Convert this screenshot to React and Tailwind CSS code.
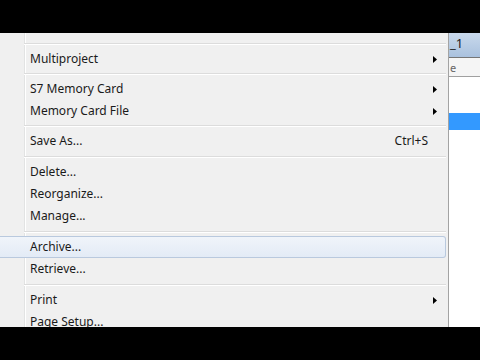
import React from "react";

const Arrow = () => (
  <svg width="4" height="7" viewBox="0 0 4 7" className="block">
    <path d="M0 0 L4 3.5 L0 7 Z" fill="#000" />
  </svg>
);

function Item({ label, arrow, shortcut, hover }) {
  return (
    <div
      className={
        "h-[22px] shrink-0 flex items-center pl-[30px] text-[12px] text-[#1a1a1a] " +
        (hover
          ? "mr-[2px] border border-l-0 border-[#b9c9de] rounded-r-[3px] bg-gradient-to-b from-[#f0f4fa] to-[#e3ebf6] pr-[9px]"
          : "pr-[11px]")
      }
    >
      <span className="flex-1 leading-none">{label}</span>
      {shortcut && <span className="mr-[9px] leading-none">{shortcut}</span>}
      {arrow && <Arrow />}
    </div>
  );
}

function Sep({ tall }) {
  return (
    <div
      className={
        (tall ? "h-[9px] " : "h-[8px] ") +
        "shrink-0 pl-[24px] pr-[2px] flex flex-col justify-center"
      }
    >
      <div className="h-px bg-[#dcdcdc]" />
      <div className="h-px bg-white" />
    </div>
  );
}

export default function App() {
  return (
    <div
      className="w-[480px] h-[360px] bg-black flex flex-col overflow-hidden"
      style={{ fontFamily: '"Noto Sans", "Open Sans", sans-serif' }}
    >
      <div className="h-[33px] shrink-0 bg-black" />
      <div className="h-[294px] shrink-0 flex overflow-hidden">
        <div className="w-[449px] shrink-0 border-r border-[#a3a3a3] bg-[linear-gradient(to_right,#f0f0f0_24px,#e2e3e3_24px,#e2e3e3_25px,#ffffff_25px,#ffffff_26px,#f0f0f0_26px)] flex flex-col">
          <div className="h-[7px] shrink-0" />
          <Sep />
          <Item label="Multiproject" arrow />
          <Sep />
          <Item label="S7 Memory Card" arrow />
          <Item label="Memory Card File" arrow />
          <Sep />
          <Item label="Save As..." shortcut="Ctrl+S" />
          <Sep tall />
          <Item label="Delete..." />
          <Item label="Reorganize..." />
          <Item label="Manage..." />
          <Sep tall />
          <Item label="Archive..." hover />
          <Item label="Retrieve..." />
          <Sep tall />
          <Item label="Print" arrow />
          <Item label="Page Setup..." />
        </div>
        <div className="flex-1 bg-white flex flex-col">
          <div className="h-[25px] shrink-0 bg-gradient-to-b from-[#c9d9ec] to-[#a9c1de] border-b border-[#767676] text-[13px] text-[#1a1a1a] pl-[1px] pt-[4px] leading-none">
            _1
          </div>
          <div className="h-[19px] shrink-0 bg-[#f5f5f5] border-b border-[#a0a0a0] text-[11px] text-[#666] pl-[1px] flex items-center leading-none">
            e
          </div>
          <div className="h-[36px] shrink-0" />
          <div className="h-[17px] shrink-0 bg-[#3399ff]" />
        </div>
      </div>
      <div className="h-[33px] shrink-0 bg-black" />
    </div>
  );
}
